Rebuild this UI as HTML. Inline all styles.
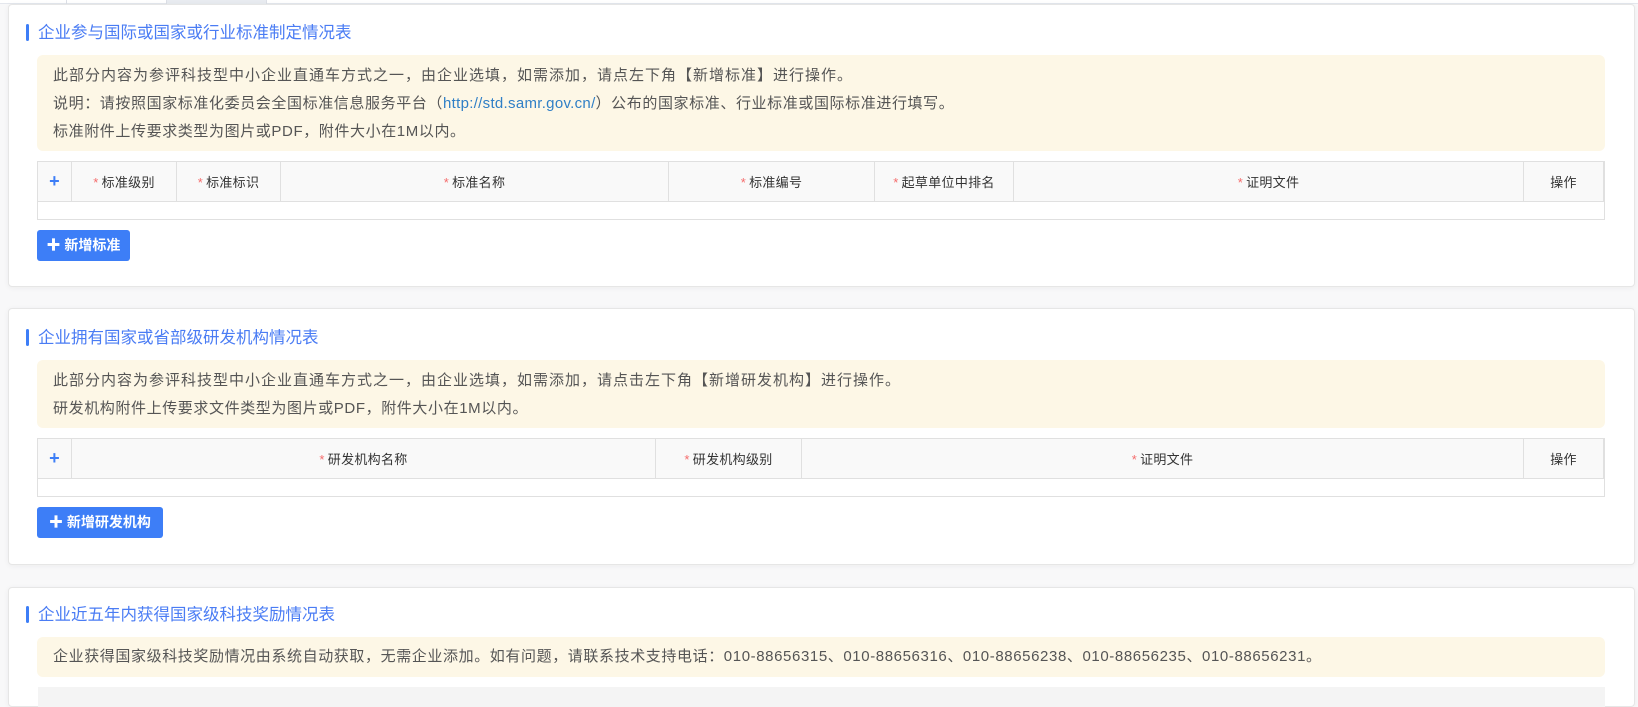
<!DOCTYPE html>
<html><head><meta charset="utf-8"><style>
*{box-sizing:border-box;margin:0;padding:0}
body{width:1638px;height:697px;overflow:hidden;background:#f8f8f9;font-family:"Liberation Sans","Noto Sans CJK SC",sans-serif;position:relative}
.tabs{position:absolute;top:0;left:0;height:4px;width:1638px;border-bottom:1px solid #e4e7ed;background:#fff}
.tab{position:absolute;top:0;height:4px;border-right:1px solid #dcdfe6}
.card{position:absolute;left:8px;width:1627px;background:#fff;border:1px solid #e6e6e6;border-radius:4px;box-shadow:0 1px 6px rgba(0,0,0,.05)}
.title{position:absolute;left:17px;font-size:16.5px;color:#4a7cf4;line-height:20px;padding-left:12px}
.title:before{content:"";position:absolute;left:0;top:1px;width:3px;height:17px;background:#3d7ef7;border-radius:2px}
.notice{position:absolute;left:28px;width:1568px;background:#fdf7e6;border-radius:6px;padding:7px 16px;font-size:15px;color:#555;line-height:28px;letter-spacing:0.6px}
.notice .c{letter-spacing:1px}
.notice a{color:#2f7fc6;text-decoration:none;letter-spacing:0.3px}
table{position:absolute;left:28px;width:1568px;border-collapse:collapse;border:1px solid #e0e0e0;font-size:13px;color:#333;table-layout:fixed}
th{background:#f9f9f9;height:40px;font-weight:normal;border-right:1px solid #e0e0e0;border-bottom:1px solid #e0e0e0;text-align:center;letter-spacing:0.3px}
td{height:18px}
.s{color:#f56c6c;margin-right:3px}
.plus{color:#3d7ef7;font-size:18px;font-weight:bold}
.btn{position:absolute;left:28px;height:31px;background:#3d7ef7;color:#fff;font-size:14px;border-radius:3px;line-height:31px;padding:0 9px;font-weight:bold;text-align:center}
</style></head><body>
<div class="tabs"><div class="tab" style="left:0;width:67px"></div><div class="tab" style="left:67px;width:100px"></div><div class="tab" style="left:167px;width:100px;background:#e8ebf0"></div></div>

<div class="card" style="top:4px;height:283px">
 <div class="title" style="top:18px">企业参与国际或国家或行业标准制定情况表</div>
 <div class="notice" style="top:50px;height:96px"><span class="c">此部分内容为参评科技型中小企业直通车方式之一，由企业选填，如需添加，请点左下角【新增标准】进行操作。</span><br>说明：请按照国家标准化委员会全国标准信息服务平台（<a>http://std.samr.gov.cn/</a>）公布的国家标准、行业标准或国际标准进行填写。<br>标准附件上传要求类型为图片或PDF，附件大小在1M以内。</div>
 <table style="top:156px"><colgroup><col style="width:34px"><col style="width:105px"><col style="width:104px"><col style="width:388px"><col style="width:206px"><col style="width:139px"><col style="width:510px"><col style="width:80px"><col></colgroup><tr>
 <th><span class="plus">+</span></th><th><span class="s">*</span>标准级别</th><th><span class="s">*</span>标准标识</th><th><span class="s">*</span>标准名称</th><th><span class="s">*</span>标准编号</th><th><span class="s">*</span>起草单位中排名</th><th><span class="s">*</span>证明文件</th><th>操作</th><th style="border-right:none"></th></tr><tr><td colspan="9"></td></tr></table>
 <div class="btn" style="top:225px;width:93px">✚ 新增标准</div>
</div>

<div class="card" style="top:308px;height:257px">
 <div class="title" style="top:19px">企业拥有国家或省部级研发机构情况表</div>
 <div class="notice" style="top:51px;height:68px"><span class="c">此部分内容为参评科技型中小企业直通车方式之一，由企业选填，如需添加，请点击左下角【新增研发机构】进行操作。</span><br>研发机构附件上传要求文件类型为图片或PDF，附件大小在1M以内。</div>
 <table style="top:129px"><colgroup><col style="width:34px"><col style="width:584px"><col style="width:146px"><col style="width:722px"><col style="width:80px"><col></colgroup><tr>
 <th><span class="plus">+</span></th><th><span class="s">*</span>研发机构名称</th><th><span class="s">*</span>研发机构级别</th><th><span class="s">*</span>证明文件</th><th>操作</th><th style="border-right:none"></th></tr><tr><td colspan="6"></td></tr></table>
 <div class="btn" style="top:198px;width:126px">✚ 新增研发机构</div>
</div>

<div class="card" style="top:587px;height:120px">
 <div class="title" style="top:17px">企业近五年内获得国家级科技奖励情况表</div>
 <div class="notice" style="top:49px;height:40px;padding-top:6px">企业获得国家级科技奖励情况由系统自动获取，无需企业添加。如有问题，请联系技术支持电话：010-88656315、010-88656316、010-88656238、010-88656235、010-88656231。</div>
 <div style="position:absolute;left:29px;top:99px;width:1567px;height:20px;background:#f4f4f4"></div>
</div>
</body></html>
